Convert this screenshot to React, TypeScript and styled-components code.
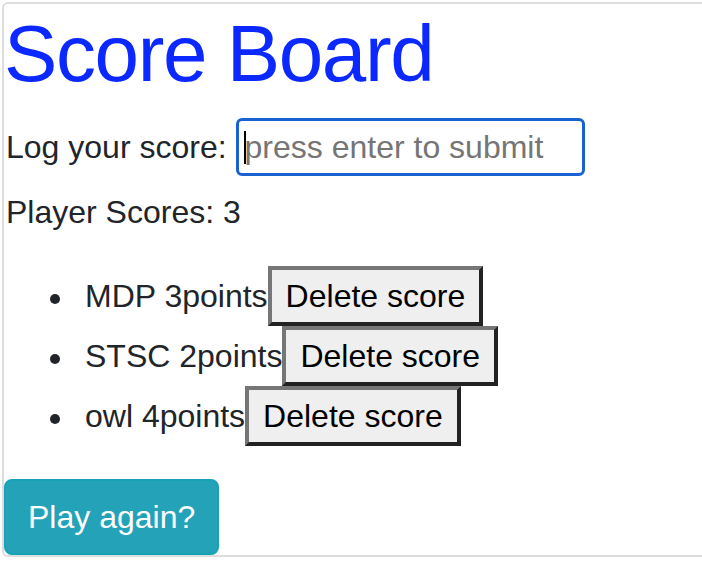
import styled, { createGlobalStyle } from "styled-components";

const GlobalStyle = createGlobalStyle`
  html, body {
    margin: 0;
    padding: 0;
    background: #fff;
    overflow: hidden;
  }
  body {
    font-family: "Liberation Sans", Arial, sans-serif;
    color: #212529;
  }
`;

const scores = [
  { name: "MDP", points: 3 },
  { name: "STSC", points: 2 },
  { name: "owl", points: 4 },
];

export default function App() {
  return (
    <>
      <GlobalStyle />
      <Board>
        <Title>Score Board</Title>
        <LogRow>
          <span>Log your score:</span>
          <InputWrap>
            <ScoreInput type="text" placeholder="press enter to submit" />
            <Caret />
          </InputWrap>
        </LogRow>
        <Count>Player Scores: {scores.length}</Count>
        <ScoreList>
          {scores.map((s) => (
            <li key={s.name}>
              {s.name} {s.points}points
              <DeleteButton>Delete score</DeleteButton>
            </li>
          ))}
        </ScoreList>
        <PlayButton>Play again?</PlayButton>
      </Board>
    </>
  );
}

const Board = styled.main`
  margin: 2px 0 0 2px;
  border: 2px solid #dddddd;
  border-right: none;
  border-radius: 6px 0 0 6px;
  font-size: 32px;
  line-height: 48px;
`;

const Title = styled.h1`
  margin: 2px 0 16px;
  font-size: 80px;
  line-height: 96px;
  font-weight: 400;
  letter-spacing: -1.4px;
  color: #0a28ff;
`;

const LogRow = styled.div`
  display: flex;
  align-items: center;
  gap: 9px;
  height: 58px;
  padding-left: 2px;
`;

const InputWrap = styled.div`
  position: relative;
  display: flex;
`;

const ScoreInput = styled.input`
  box-sizing: border-box;
  width: 349px;
  height: 58px;
  padding: 0 6px;
  border: 3px solid #1a62d2;
  border-radius: 6px;
  outline: none;
  font-family: "Liberation Sans", Arial, sans-serif;
  font-size: 32px;
  color: #212529;

  &::placeholder {
    color: #757575;
  }
`;

const Caret = styled.span`
  position: absolute;
  left: 8px;
  top: 13px;
  width: 2px;
  height: 33px;
  background: #000;
`;

const Count = styled.p`
  margin: 12px 0 30px;
  padding-left: 2px;
`;

const ScoreList = styled.ul`
  margin: 0 0 33px;
  padding-left: 81px;
  list-style: none;

  li {
    line-height: 60px;
    height: 60px;
  }

  li::before {
    content: "";
    display: inline-block;
    width: 10px;
    height: 10px;
    margin: 0 25px 0 -35px;
    border-radius: 50%;
    background: #212529;
    vertical-align: middle;
  }
`;

const DeleteButton = styled.button`
  box-sizing: border-box;
  height: 60px;
  padding: 2px 14px;
  border: 4px solid;
  border-color: #767676 #222 #222 #767676;
  background: #efefef;
  font-family: "Liberation Sans", Arial, sans-serif;
  font-size: 32px;
  line-height: 48px;
  color: #000;
  vertical-align: baseline;
`;

const PlayButton = styled.button`
  display: block;
  padding: 12px 22px;
  border: 2px solid #17a2b8;
  border-radius: 8px;
  background: #24a2b8;
  color: #fff;
  font-family: "Liberation Sans", Arial, sans-serif;
  font-size: 32px;
  line-height: 48px;
`;
